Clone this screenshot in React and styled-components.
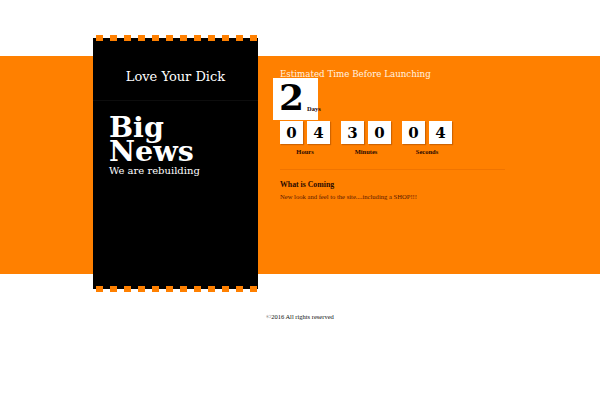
import React from 'react'
import styled, { createGlobalStyle } from 'styled-components'

const Global = createGlobalStyle`
  body {
    margin: 0;
    background: #fff;
    font-family: "DejaVu Serif", serif;
  }
`

const ORANGE = '#ff8000'
const SMALL = '"Liberation Serif", "Times New Roman", serif'

const Page = styled.div`
  width: 600px;
  height: 400px;
  overflow: hidden;
`

const Band = styled.section`
  margin-top: 56px;
  height: 218px;
  background: ${ORANGE};
`

const Inner = styled.div`
  width: 414px;
  margin: 0 auto;
  display: flex;
  align-items: flex-start;
`

const Card = styled.div`
  width: 165px;
  margin-top: -21px;
  display: flex;
  flex-direction: column;
  flex: none;
`

const Strip = styled.div`
  height: 6px;
  background:
    repeating-linear-gradient(90deg, ${ORANGE} 0 7px, transparent 7px 14px) 3px 0 / 100% 100% no-repeat,
    linear-gradient(${({ bottom }) => (bottom ? 'to top' : 'to bottom')}, transparent 3px, #000 3px);
`

const CardBody = styled.div`
  height: 245px;
  background: #000;
  color: #fff;
  padding: 27px 0 0 16px;
  box-sizing: border-box;
`

const Tagline = styled.div`
  font-size: 13px;
  line-height: 18px;
  text-align: center;
  margin-left: -16px;
  padding-bottom: 14px;
  border-bottom: 1px solid #0d0d0d;
`

const BigTitle = styled.h1`
  margin: 15px 0 0;
  font-size: 28.5px;
  line-height: 23.5px;
  font-weight: bold;
`

const Sub = styled.p`
  margin: 1px 0 0;
  font-size: 10px;
  line-height: 13px;
`

const Right = styled.div`
  margin-left: 15px;
  padding-top: 12px;
  flex: 1;
`

const Heading = styled.div`
  margin-left: 7px;
  font-size: 8.7px;
  line-height: 12px;
  color: #fff3e0;
`

const DaysBox = styled.div`
  width: 45px;
  height: 42px;
  margin-top: -2px;
  background: #fff;
  display: flex;
  align-items: flex-end;
  box-sizing: border-box;
  padding: 0 0 8px 6px;
`

const DaysNum = styled.span`
  font-size: 36px;
  line-height: 30px;
  font-weight: bold;
  color: #000;
`

const DaysLabel = styled.span`
  font-family: ${SMALL};
  font-size: 6.5px;
  font-weight: bold;
  color: #200;
  margin-left: 3px;
`

const Counters = styled.div`
  display: flex;
  gap: 11px;
  margin-left: 7px;
  margin-top: 1px;
`

const Unit = styled.div`
  display: flex;
  flex-direction: column;
  align-items: center;
`

const Pair = styled.div`
  display: flex;
  gap: 4px;
`

const Digit = styled.div`
  width: 23px;
  height: 23px;
  background: #fff;
  box-shadow: 1px 1px 1px rgba(120, 50, 0, 0.35);
  display: flex;
  align-items: center;
  justify-content: center;
  font-size: 15px;
  font-weight: bold;
  color: #000;
`

const UnitLabel = styled.div`
  margin-top: 4px;
  font-family: ${SMALL};
  font-size: 6.5px;
  font-weight: bold;
  color: #2a0a00;
`

const Divider = styled.hr`
  margin: 14px 0 0 7px;
  width: 225px;
  border: 0;
  border-top: 1px solid #f07400;
`

const ComingTitle = styled.h3`
  margin: 10px 0 0 7px;
  font-family: ${SMALL};
  font-size: 7.8px;
  font-weight: bold;
  color: #2a0a00;
`

const ComingText = styled.p`
  margin: 4px 0 0 7px;
  font-family: ${SMALL};
  font-size: 6.6px;
  color: #5a1800;
`

const Footer = styled.footer`
  margin-top: 39px;
  text-align: center;
  font-family: ${SMALL};
  font-size: 6.5px;
  color: #111;
`

const units = [
  ['0', '4', 'Hours'],
  ['3', '0', 'Minutes'],
  ['0', '4', 'Seconds'],
]

export default function App () {
  return (
    <Page>
      <Global />
      <Band>
        <Inner>
          <Card>
            <Strip />
            <CardBody>
              <Tagline>Love Your Dick</Tagline>
              <BigTitle>Big<br />News</BigTitle>
              <Sub>We are rebuilding</Sub>
            </CardBody>
            <Strip bottom />
          </Card>
          <Right>
            <Heading>Estimated Time Before Launching</Heading>
            <DaysBox>
              <DaysNum>2</DaysNum>
              <DaysLabel>Days</DaysLabel>
            </DaysBox>
            <Counters>
              {units.map(([a, b, label]) => (
                <Unit key={label}>
                  <Pair>
                    <Digit>{a}</Digit>
                    <Digit>{b}</Digit>
                  </Pair>
                  <UnitLabel>{label}</UnitLabel>
                </Unit>
              ))}
            </Counters>
            <Divider />
            <ComingTitle>What is Coming</ComingTitle>
            <ComingText>New look and feel to the site....including a SHOP!!!</ComingText>
          </Right>
        </Inner>
      </Band>
      <Footer>©2016 All rights reserved</Footer>
    </Page>
  )
}
